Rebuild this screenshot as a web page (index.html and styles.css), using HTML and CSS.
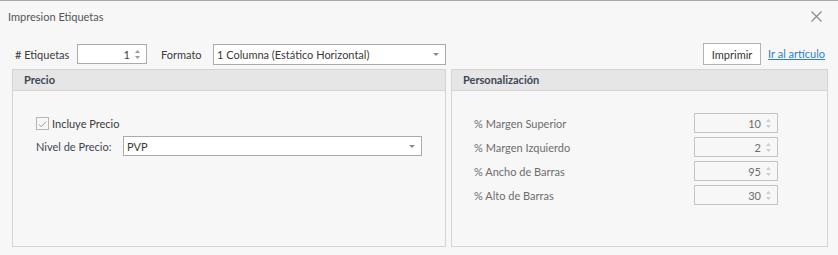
FILE: index.html
```html
<!DOCTYPE html>
<html lang="es">

<head>
  <meta charset="UTF-8">
  <meta name="viewport" content="width=device-width, initial-scale=1.0">
  <title>Impresion Etiquetas</title>
  <link rel="stylesheet" href="styles.css">
</head>

<body>

  <div class="window">
    <div class="titlebar">
      <span class="title">Impresion Etiquetas</span>
      <span class="close">
        <svg width="11" height="11" viewBox="0 0 11 11"><path d="M0.5 0.5 L10.5 10.5 M10.5 0.5 L0.5 10.5" stroke="#8a8a8a" stroke-width="1.2" fill="none"/></svg>
      </span>
    </div>

    <div class="toolbar">
      <span class="lbl lbl-etiq">#&nbsp;Etiquetas</span>
      <div class="spin spin-etiq">
        <span class="val">1</span>
        <span class="arrows">
          <svg width="7" height="13" viewBox="0 0 7 13"><path d="M1 5 L3.5 2 L6 5 Z M1 8 L3.5 11 L6 8 Z" fill="#9a9a9a"/></svg>
        </span>
      </div>
      <span class="lbl lbl-formato">Formato</span>
      <div class="combo combo-formato">
        <span class="val">1 Columna (Estático Horizontal)</span>
        <span class="drop"></span>
      </div>
      <button class="btn">Imprimir</button>
      <a class="link" href="#">Ir al artículo</a>
    </div>

    <div class="groups">
      <div class="group group-precio">
        <div class="group-head">Precio</div>
        <div class="group-body">
          <label class="check">
            <span class="box">
              <svg width="9" height="8" viewBox="0 0 9 8"><path d="M1 4.5 L3.3 6.8 L8 1.5" stroke="#9a9a9a" stroke-width="1" fill="none"/></svg>
            </span>
            Incluye Precio
          </label>
          <div class="field-row">
            <span class="lbl lbl-nivel">Nivel de Precio:</span>
            <div class="combo combo-nivel">
              <span class="val">PVP</span>
              <span class="drop"></span>
            </div>
          </div>
        </div>
      </div>

      <div class="group group-pers">
        <div class="group-head">Personalización</div>
        <div class="group-body pers-body">
          <div class="pers-row">
            <span class="lbl-off">% Margen Superior</span>
            <div class="spin spin-off"><span class="val">10</span><span class="arrows"><svg width="7" height="13" viewBox="0 0 7 13"><path d="M1 5 L3.5 2 L6 5 Z M1 8 L3.5 11 L6 8 Z" fill="#cdcdcd"/></svg></span></div>
          </div>
          <div class="pers-row">
            <span class="lbl-off">% Margen Izquierdo</span>
            <div class="spin spin-off"><span class="val">2</span><span class="arrows"><svg width="7" height="13" viewBox="0 0 7 13"><path d="M1 5 L3.5 2 L6 5 Z M1 8 L3.5 11 L6 8 Z" fill="#cdcdcd"/></svg></span></div>
          </div>
          <div class="pers-row">
            <span class="lbl-off">% Ancho de Barras</span>
            <div class="spin spin-off"><span class="val">95</span><span class="arrows"><svg width="7" height="13" viewBox="0 0 7 13"><path d="M1 5 L3.5 2 L6 5 Z M1 8 L3.5 11 L6 8 Z" fill="#cdcdcd"/></svg></span></div>
          </div>
          <div class="pers-row">
            <span class="lbl-off">% Alto de Barras</span>
            <div class="spin spin-off"><span class="val">30</span><span class="arrows"><svg width="7" height="13" viewBox="0 0 7 13"><path d="M1 5 L3.5 2 L6 5 Z M1 8 L3.5 11 L6 8 Z" fill="#cdcdcd"/></svg></span></div>
          </div>
        </div>
      </div>
    </div>
  </div>

</body>

</html>
```

FILE: styles.css
```css
* {
  box-sizing: border-box;
}

body {
  margin: 0;
  font-family: Lato, "Noto Sans", sans-serif;
  font-size: 11px;
  color: #3a3a3a;
  background: #f7f7f7;
}

.window {
  height: 255px;
  border-top: 1px solid #a9a9a9;
  background: #f7f7f7;
}

/* title bar */
.titlebar {
  height: 31px;
  display: flex;
  align-items: center;
  padding: 0 16px 0 8px;
}

.title {
  color: #555;
}

.close {
  margin-left: auto;
  display: flex;
}

/* top row */
.toolbar {
  display: flex;
  align-items: center;
  height: 22px;
  margin-top: 11px;
  padding-left: 15px;
}

.lbl {
  color: #3a3a3a;
  white-space: nowrap;
}

.lbl-etiq {
  width: 62px;
  overflow: hidden;
}

.lbl-formato {
  width: 52px;
  margin-left: 14px;
}

.spin,
.combo {
  display: flex;
  align-items: center;
  height: 20px;
  background: #fff;
  border: 1px solid #ababab;
}

.spin .val {
  flex: 1;
  text-align: right;
  padding-right: 4px;
}

.spin .arrows {
  display: flex;
  width: 12px;
  padding-right: 4px;
}

.spin-etiq {
  width: 70px;
}

.combo .val {
  flex: 1;
  padding-left: 3px;
  white-space: nowrap;
}

.combo .drop {
  width: 0;
  height: 0;
  margin-right: 6px;
  border-left: 3px solid transparent;
  border-right: 3px solid transparent;
  border-top: 3px solid #8a8a8a;
}

.combo-formato {
  width: 233px;
  height: 21px;
}

.btn {
  margin-left: auto;
  width: 58px;
  height: 22px;
  padding: 0;
  background: #fff;
  border: 1px solid #b3b3b3;
  font-family: inherit;
  font-size: 11px;
  color: #333;
}

.link {
  margin: -2px 13px 0 7px;
  color: #2b7fd1;
  text-decoration: underline;
}

/* group boxes */
.groups {
  display: flex;
  gap: 5px;
  margin-top: 4px;
  padding: 0 10px 0 12px;
}

.group {
  height: 178px;
  border: 1px solid #d4d4d4;
  display: flex;
  flex-direction: column;
}

.group-precio {
  width: 434px;
}

.group-pers {
  flex: 1;
}

.group-head {
  height: 21px;
  line-height: 20px;
  padding-left: 11px;
  background: #e6e6e6;
  border-bottom: 1px solid #d4d4d4;
  font-weight: bold;
  color: #3d4654;
}

.group-body {
  flex: 1;
  padding: 26px 0 0 23px;
}

.check {
  display: flex;
  align-items: center;
  gap: 3px;
  height: 13px;
  color: #3a3a3a;
}

.check .box {
  width: 13px;
  height: 13px;
  border: 1px solid #b5b5b5;
  background: #f7f7f7;
  display: flex;
  align-items: center;
  justify-content: center;
}

.field-row {
  display: flex;
  align-items: center;
  margin-top: 6px;
}

.lbl-nivel {
  width: 87px;
  color: #3e4654;
}

.combo-nivel {
  width: 299px;
}

.pers-body {
  padding: 22px 0 0 22px;
  display: flex;
  flex-direction: column;
  gap: 4px;
}

.pers-row {
  display: flex;
  align-items: center;
  height: 20px;
}

.lbl-off {
  width: 220px;
  color: #6d6d6d;
}

.spin-off {
  width: 84px;
  background: #f7f7f7;
  border-color: #c4c4c4;
  color: #6d6d6d;
}
```
